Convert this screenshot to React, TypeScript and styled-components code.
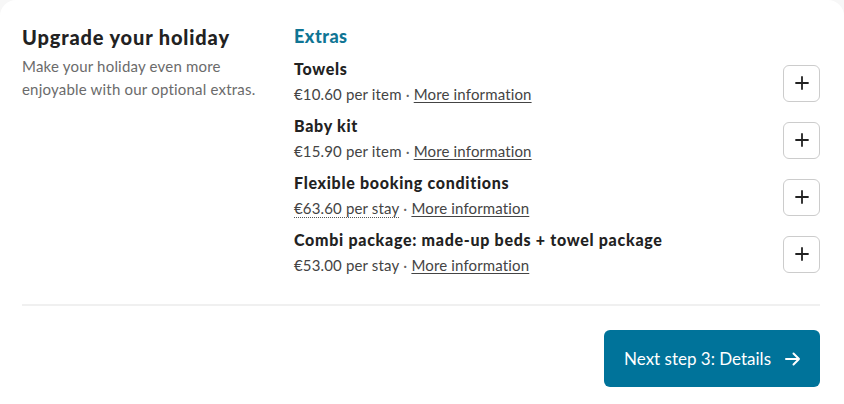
import React from "react";
import styled, { createGlobalStyle } from "styled-components";

const GlobalStyle = createGlobalStyle`
  html, body {
    margin: 0;
    padding: 0;
    background: #f7f7f7;
    font-family: "Lato", "Liberation Sans", sans-serif;
    color: #222;
  }
`;

type Extra = { name: string; price: string; dotted?: boolean };

const extras: Extra[] = [
  { name: "Towels", price: "€10.60 per item" },
  { name: "Baby kit", price: "€15.90 per item" },
  { name: "Flexible booking conditions", price: "€63.60 per stay", dotted: true },
  { name: "Combi package: made-up beds + towel package", price: "€53.00 per stay" },
];

export default function App() {
  return (
    <>
      <GlobalStyle />
      <Card>
        <Content>
          <Intro>
            <Title>Upgrade your holiday</Title>
            <Lead>Make your holiday even more enjoyable with our optional extras.</Lead>
          </Intro>
          <ExtrasList>
            <Heading>Extras</Heading>
            {extras.map((e) => (
              <Row key={e.name}>
                <Info>
                  <Name>{e.name}</Name>
                  <Meta>
                    <Price $dotted={e.dotted}>{e.price}</Price>
                    <Sep>·</Sep>
                    <MoreLink href="#">More information</MoreLink>
                  </Meta>
                </Info>
                <AddButton aria-label={`Add ${e.name}`}>
                  <svg width="14" height="14" viewBox="0 0 14 14">
                    <path d="M7 1v12M1 7h12" stroke="#222" strokeWidth="1.8" strokeLinecap="round" />
                  </svg>
                </AddButton>
              </Row>
            ))}
          </ExtrasList>
        </Content>
        <Divider />
        <Footer>
          <NextButton>
            Next step 3: Details
            <svg width="16" height="14" viewBox="0 0 16 14">
              <path d="M1 7h13M8.5 1.5 14 7l-5.5 5.5" stroke="#fff" strokeWidth="2" fill="none" strokeLinecap="round" strokeLinejoin="round" />
            </svg>
          </NextButton>
        </Footer>
      </Card>
    </>
  );
}

const Card = styled.div`
  background: #fff;
  border-radius: 16px 16px 0 0;
  min-height: 404px;
  box-sizing: border-box;
  padding: 24px 24px 0 22px;
`;

const Content = styled.div`
  display: grid;
  grid-template-columns: 272px 1fr;
`;

const Intro = styled.div`
  display: flex;
  flex-direction: column;
`;

const Title = styled.h2`
  margin: 0;
  font-size: 20px;
  font-weight: 900;
  line-height: 26px;
  letter-spacing: 0.85px;
  color: #222;
`;

const Lead = styled.p`
  margin: 5px 0 0;
  font-size: 15px;
  line-height: 23px;
  letter-spacing: 0.2px;
  color: #6b6b6b;
  width: 250px;
`;

const ExtrasList = styled.div`
  display: flex;
  flex-direction: column;
`;

const Heading = styled.h3`
  margin: 0 0 8px;
  font-size: 18px;
  font-weight: 900;
  line-height: 24px;
  letter-spacing: 0.5px;
  color: #0f7594;
`;

const Row = styled.div`
  display: flex;
  align-items: center;
  justify-content: space-between;
  height: 57px;
`;

const Info = styled.div`
  display: flex;
  flex-direction: column;
  margin-top: -6px;
`;

const Name = styled.div`
  font-size: 16px;
  font-weight: 900;
  line-height: 22px;
  letter-spacing: 0.7px;
  margin-bottom: 2px;
  color: #222;
`;

const Meta = styled.div`
  font-size: 15px;
  line-height: 24px;
  letter-spacing: 0.15px;
  color: #444;
`;

const Price = styled.span<{ $dotted?: boolean }>`
  ${(p) => (p.$dotted ? "border-bottom: 1.5px dotted #555;" : "")}
`;

const Sep = styled.span`
  margin: 0 4px;
  color: #666;
`;

const MoreLink = styled.a`
  color: #444;
  text-decoration: underline;
  text-underline-offset: 2px;
`;

const AddButton = styled.button`
  width: 37px;
  height: 37px;
  border: 1px solid #ccc;
  border-radius: 6px;
  background: #fff;
  display: flex;
  align-items: center;
  justify-content: center;
  padding: 0;
  margin-top: -3px;
  cursor: pointer;
`;

const Divider = styled.hr`
  border: none;
  height: 2px;
  background: #f0f0f0;
  margin: 20px 0 0;
`;

const Footer = styled.div`
  display: flex;
  justify-content: flex-end;
  padding-top: 24px;
`;

const NextButton = styled.button`
  display: flex;
  align-items: center;
  gap: 14px;
  height: 57px;
  padding: 0 19px 0 20px;
  background: #00739a;
  border: none;
  border-radius: 6px;
  color: #fff;
  font-family: "Lato", "Liberation Sans", sans-serif;
  font-size: 17px;
  cursor: pointer;
`;
